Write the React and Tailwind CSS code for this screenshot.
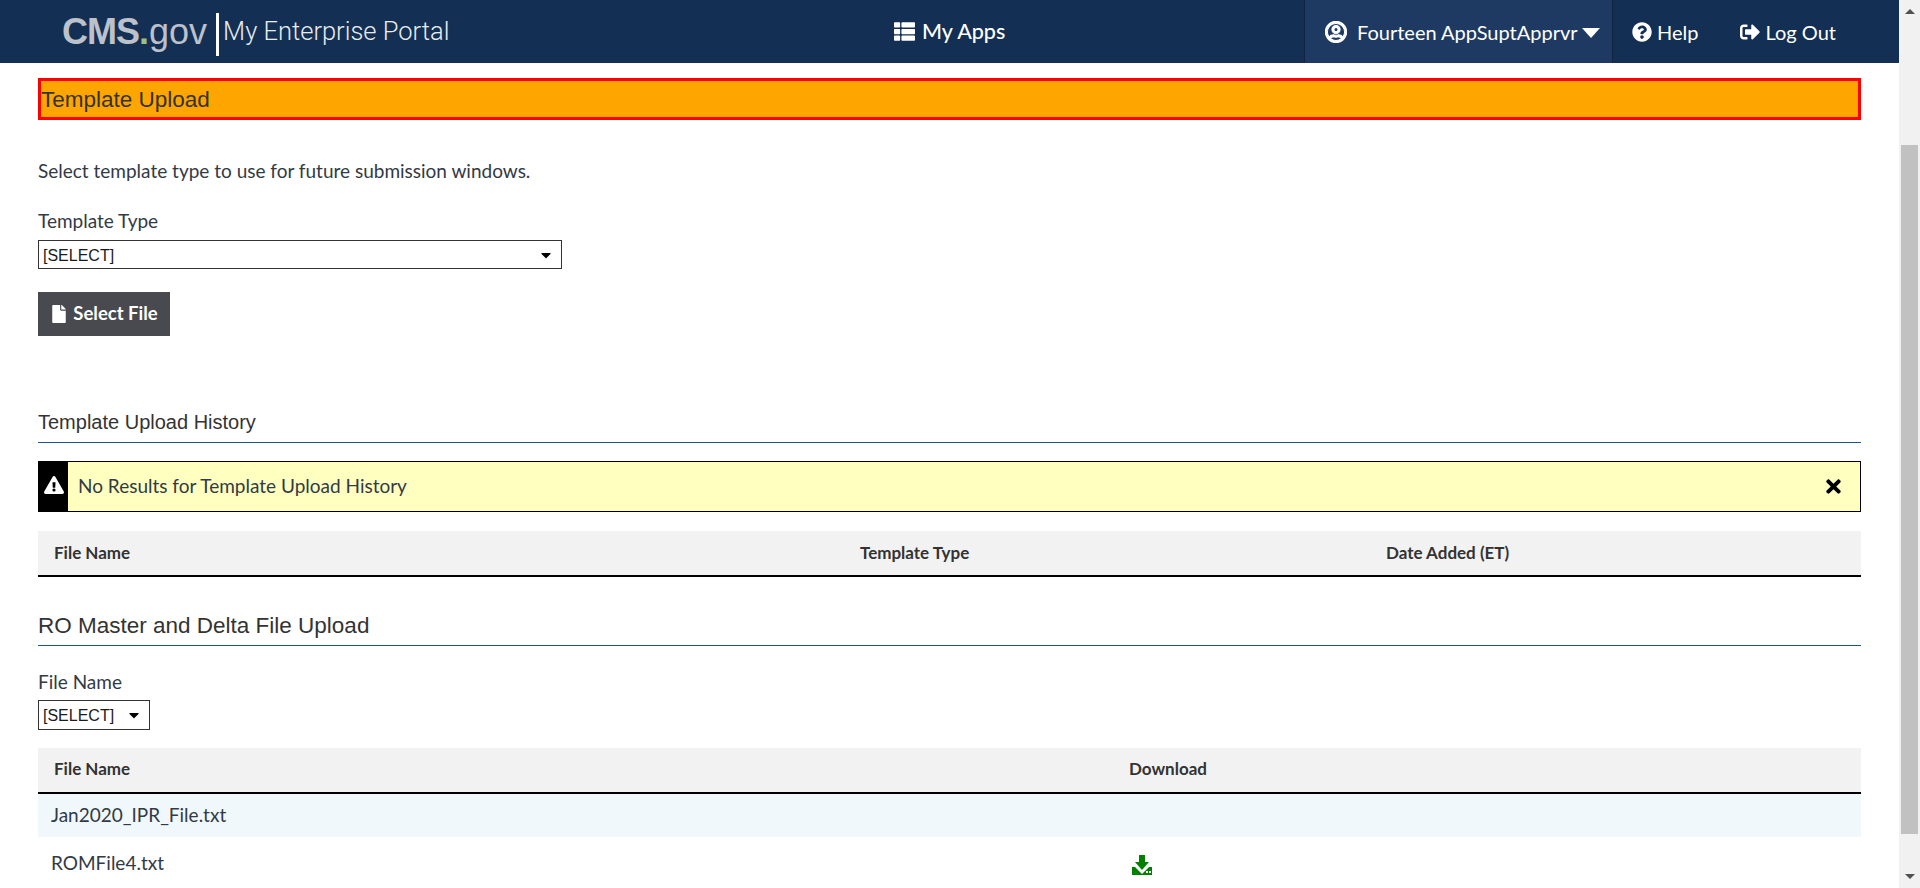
import { FaThList, FaRegUserCircle, FaCaretDown, FaQuestionCircle, FaSignOutAlt, FaFile, FaExclamationTriangle, FaTimes } from "react-icons/fa";

const body = "font-['Lato','Noto_Sans',sans-serif]";
const arial = "font-['Liberation_Sans',Arial,sans-serif]";

function Select({ className }) {
  return (
    <div className={`relative ${className}`}>
      <select className={`${arial} w-full h-full appearance-none bg-white border border-[#333] pl-[4px] pt-[2px] text-[16px] text-[#1a1a1a] rounded-none`}>
        <option>[SELECT]</option>
      </select>
      <FaCaretDown className="absolute right-[8px] top-[7px] text-[16px] text-black pointer-events-none" />
    </div>
  );
}

function Heading({ children, className }) {
  return (
    <h2 className={`${arial} border-b border-[#1a5488] text-[#333] ${className}`}>{children}</h2>
  );
}

function DownloadIcon() {
  return (
    <svg viewBox="0 0 20 20" className="w-[20px] h-[20px] mt-[5px]" fill="#008000">
      <path d="M7 0h6v7h4l-7 8-7-8h4z" />
      <path d="M0 20v-8h3l7 7 7-7h3v8z" />
      <path d="M14 16h2v2h-2zM17 16h2v2h-2z" fill="#fff" />
    </svg>
  );
}

export default function App() {
  return (
    <div className={`${body} h-[888px] overflow-hidden flex bg-white text-[#323a45]`}>
      <div className="flex-1 min-w-0 flex flex-col">
        <header className="h-[63px] shrink-0 bg-[#132f53] flex items-stretch text-white">
          <div className="w-[558px] pl-[62px] flex items-center">
            <span className={`${arial} text-[36px] text-[#bcc1cb] leading-none`}>
              <b className="tracking-[-1px]">CMS</b><b className="text-[#9bbf8a]">.</b>gov
            </span>
            <span className="w-[3px] h-[43px] bg-white mt-[6px] ml-[9px] mr-[4px]" />
            <span className="font-['Roboto',sans-serif] text-[25.5px] font-light text-[#e8ebef] leading-none">My Enterprise Portal</span>
          </div>
          <div className="w-[746px] flex items-center pl-[336px]">
            <div className="flex items-center gap-[7px] text-[21.5px] font-medium">
              <FaThList className="text-[21px]" />
              <span>My Apps</span>
            </div>
          </div>
          <div className="w-[309px] bg-[#1e3a63] flex items-center pl-[20px] text-[20px] border-x border-[#10263f]">
            <FaRegUserCircle className="text-[22px] mr-[10px]" stroke="currentColor" strokeWidth={24} />
            <span>Fourteen AppSuptApprvr</span>
            <span className="ml-[4px] mt-[3px] w-0 h-0 border-x-[9px] border-x-transparent border-t-[10px] border-t-white" />
          </div>
          <div className="flex items-center pl-[19px] gap-[5px] text-[20px]">
            <FaQuestionCircle className="text-[20px]" />
            <span>Help</span>
          </div>
          <div className="flex items-center pl-[42px] gap-[5px] text-[20px]">
            <FaSignOutAlt className="text-[20px]" />
            <span>Log Out</span>
          </div>
        </header>

        <main className="flex-1 min-h-0 overflow-hidden pl-[38px] pr-[38px] pt-[15px]">
          <div className={`${arial} h-[42px] border-[3px] border-[#f00] bg-[#ffa500] flex items-center pt-[1px] text-[22.5px] text-[#333]`}>
            Template Upload
          </div>

          <p className="mt-[37px] text-[19px] leading-[28px]">Select template type to use for future submission windows.</p>
          <label className="block mt-[22px] text-[19px] leading-[28px]">Template Type</label>
          <Select className="mt-[5px] w-[524px] h-[29px]" />
          <button className="mt-[23px] h-[44px] w-[132px] bg-[#484a4f] text-white text-[18.5px] font-bold flex items-center justify-center gap-[5px]">
            <FaFile className="text-[18px]" />
            Select File
          </button>

          <Heading className="mt-[70px] h-[37px] text-[20px] leading-[32px]">Template Upload History</Heading>

          <div className="mt-[18px] h-[51px] border border-black bg-[#ffffc0] flex items-center">
            <div className="w-[29px] h-full bg-black flex items-center justify-center text-white pb-[4px]">
              <FaExclamationTriangle className="text-[20px]" />
            </div>
            <span className="ml-[10px] text-[19px]">No Results for Template Upload History</span>
            <FaTimes className="ml-auto mr-[16px] text-[21px] text-black" />
          </div>

          <div className="mt-[19px] h-[46px] bg-[#f2f2f2] border-b-2 border-black grid grid-cols-[806px_526px_1fr] items-center pl-[16px] text-[17px] font-bold text-[#333]">
            <span>File Name</span>
            <span>Template Type</span>
            <span>Date Added (ET)</span>
          </div>

          <Heading className="mt-[32px] h-[37px] text-[22.5px] leading-[34px]">RO Master and Delta File Upload</Heading>

          <label className="block mt-[22px] text-[19px] leading-[28px]">File Name</label>
          <Select className="mt-[4px] w-[112px] h-[30px]" />

          <div className="mt-[18px] h-[46px] pb-[2px] bg-[#f2f2f2] border-b-2 border-black grid grid-cols-[1075px_1fr] items-center pl-[16px] text-[17px] font-bold text-[#333]">
            <span>File Name</span>
            <span>Download</span>
          </div>
          <div className="h-[43px] bg-[#f0f8fb] flex items-center pl-[13px] text-[19px]">Jan2020_IPR_File.txt</div>
          <div className="h-[51px] grid grid-cols-[1081px_1fr] items-center pl-[13px] text-[19px]">
            <span className="pt-[2px]">ROMFile4.txt</span>
            <DownloadIcon />
          </div>
        </main>
      </div>

      <div className="w-[21px] shrink-0 bg-[#f1f1f1] flex flex-col items-center">
        <div className="h-[23px] flex items-center justify-center">
          <div className="w-0 h-0 border-x-[5px] border-x-transparent border-b-[5px] border-b-[#505050]" />
        </div>
        <div className="mt-[122px] w-[17px] h-[689px] bg-[#c1c1c1]" />
        <div className="mt-[40px] w-0 h-0 border-x-[5px] border-x-transparent border-t-[5px] border-t-[#505050]" />
      </div>
    </div>
  );
}
